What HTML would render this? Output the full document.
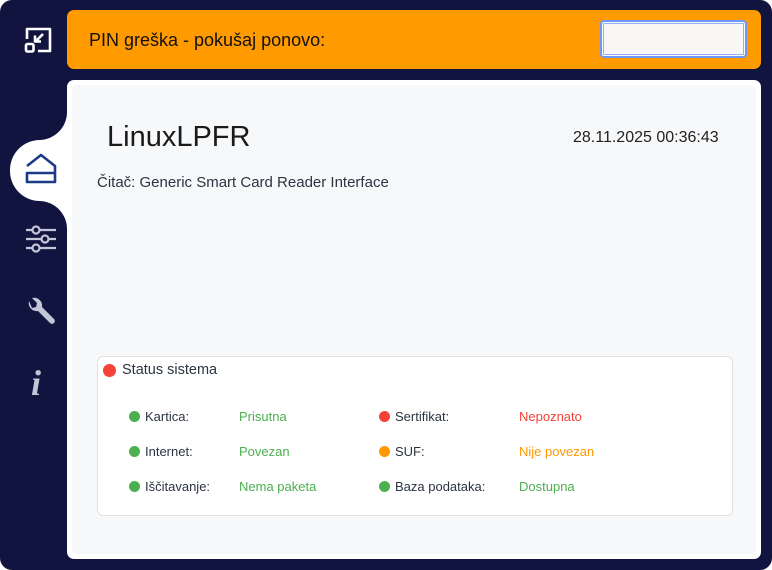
<!DOCTYPE html>
<html><head><style>
html{background:#fff}
body{margin:0;width:772px;height:570px;background:#11143f;position:relative;overflow:hidden;font-family:"Liberation Sans","DejaVu Sans",sans-serif;border-radius:12px}
.abs{position:absolute}
.orange{left:67px;top:10px;width:694px;height:59px;background:#ff9a00;border-radius:7px}
.panel{left:67px;top:80px;width:694px;height:479px;background:#fff;border-radius:7px}
.inner{left:72px;top:85px;width:684px;height:469px;background:#f7f8fa;border-radius:5px}
.status{left:97px;top:356px;width:634px;height:158px;background:#fff;border:1px solid #dfe1e4;border-radius:6px}
.dot{display:inline-block;width:11px;height:11px;border-radius:50%;position:absolute}
.t{position:absolute;font-size:13px;color:#2b3440;white-space:nowrap}
.g{color:#4caf50}.r{color:#f44336}.o{color:#ff9800}
</style></head><body>
<div class="abs orange"></div>
<div class="abs t" style="left:89px;top:30px;font-size:18px;color:#111">PIN greška - pokušaj ponovo:</div>
<div class="abs" style="left:600px;top:20px;width:143px;height:34px;border:2px solid #6b97ff;border-radius:4px;background:#f8f7f5;box-shadow:inset 0 0 0 1px #fff, inset 0 0 0 2px #8fb0ff"></div>
<div class="abs panel"></div>
<div class="abs" style="left:10px;top:140px;width:70px;height:61px;background:#fff;border-radius:30px 0 0 30px"></div>
<div class="abs" style="left:40px;top:100px;width:40px;height:50px;background:#fff"></div>
<div class="abs" style="left:40px;top:195px;width:40px;height:55px;background:#fff"></div>
<div class="abs" style="left:7px;top:80px;width:60px;height:60px;background:#11143f;border-radius:0 0 28px 0"></div>
<div class="abs" style="left:7px;top:201px;width:60px;height:60px;background:#11143f;border-radius:0 28px 0 0"></div>
<div class="abs inner"></div>
<svg class="abs" style="left:24px;top:26px" width="30" height="30" viewBox="0 0 30 30" fill="none" stroke="#fff" stroke-width="2.6" stroke-linejoin="round">
<path d="M3 13V3h23v22H14"/><path d="M19 8l-7 7M11 9.5v6h6"/><rect x="2" y="18" width="7.5" height="7.5" rx="1.5"/></svg>
<svg class="abs" style="left:25px;top:152px" width="32" height="32" viewBox="0 0 32 32" fill="none" stroke="#1d3a87" stroke-width="2.6" stroke-linejoin="round">
<path d="M2 14L16 3l14 11v16H2v-9h28"/></svg>
<svg class="abs" style="left:25px;top:223px" width="32" height="32" viewBox="0 0 32 32" fill="none" stroke="#c3c6d6" stroke-width="2.2">
<path d="M1 7h30M1 16h30M1 25h30"/><circle cx="11" cy="7" r="3.5" fill="#11143f"/><circle cx="20" cy="16" r="3.5" fill="#11143f"/><circle cx="11" cy="25" r="3.5" fill="#11143f"/></svg>
<svg class="abs" style="left:26px;top:296px" width="30" height="30" viewBox="0 0 30 30"><path d="M3 5a8 8 0 0 0 9 10l12 12a2.5 2.5 0 0 0 4-4L16 11A8 8 0 0 0 6 2l5 5-1 4-4 1z" fill="#c3c6d6"/></svg>
<div class="abs" style="left:31px;top:362px;font:italic bold 36px 'Liberation Serif',serif;color:#c3c6d6">i</div>
<div class="t" style="left:107px;top:121px;font-size:29px;color:#1a1a1a">LinuxLPFR</div>
<div class="t" style="left:573px;top:129px;font-size:16px;color:#222">28.11.2025 00:36:43</div>
<div class="t" style="left:97px;top:174px;font-size:15px">Čitač: Generic Smart Card Reader Interface</div>
<div class="abs status"></div>
<span class="dot" style="left:103px;top:364px;width:13px;height:13px;background:#f44336"></span>
<div class="t" style="left:122px;top:362px;font-size:14.5px">Status sistema</div>
<span class="dot" style="left:129px;top:411px;background:#4caf50"></span><div class="t" style="left:145px;top:409px">Kartica:</div><div class="t g" style="left:239px;top:409px">Prisutna</div>
<span class="dot" style="left:129px;top:446px;background:#4caf50"></span><div class="t" style="left:145px;top:444px">Internet:</div><div class="t g" style="left:239px;top:444px">Povezan</div>
<span class="dot" style="left:129px;top:481px;background:#4caf50"></span><div class="t" style="left:145px;top:479px">Iščitavanje:</div><div class="t g" style="left:239px;top:479px">Nema paketa</div>
<span class="dot" style="left:379px;top:411px;background:#f44336"></span><div class="t" style="left:395px;top:409px">Sertifikat:</div><div class="t r" style="left:519px;top:409px">Nepoznato</div>
<span class="dot" style="left:379px;top:446px;background:#ff9800"></span><div class="t" style="left:395px;top:444px">SUF:</div><div class="t o" style="left:519px;top:444px">Nije povezan</div>
<span class="dot" style="left:379px;top:481px;background:#4caf50"></span><div class="t" style="left:395px;top:479px">Baza podataka:</div><div class="t g" style="left:519px;top:479px">Dostupna</div>
</body></html>
